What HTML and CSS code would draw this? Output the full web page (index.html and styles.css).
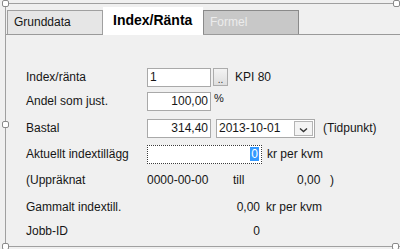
FILE: index.html
```html
<!DOCTYPE html>
<html>

<head>
    <title>Index/Ränta</title>
    <link rel="stylesheet" href="styles.css">
</head>

<body>
    <div class="panel">
        <div class="tabs">
            <div class="tab">Grunddata</div>
            <div class="tab active">Index/Ränta</div>
            <div class="tab disabled">Formel</div>
        </div>

        <div class="form">
            <div class="label">Index/ränta</div>
            <div class="field">
                <span class="box w64">1</span>
                <span class="browse">..</span>
                <span class="kpi">KPI 80</span>
            </div>

            <div class="label">Andel som just.</div>
            <div class="field">
                <span class="box w64 num">100,00</span>
                <span class="pct">%</span>
            </div>

            <div class="label">Bastal</div>
            <div class="field">
                <span class="box w64 num">314,40</span>
                <span class="box combo">
                    <span class="combo-text">2013-10-01</span>
                    <span class="drop">
                        <svg width="9" height="6" viewBox="0 0 9 6"><path d="M1 1.5 L4.5 4.5 L8 1.5" fill="none" stroke="#333" stroke-width="1.4"/></svg>
                    </span>
                </span>
                <span class="tid">(Tidpunkt)</span>
            </div>

            <div class="label">Aktuellt indextillägg</div>
            <div class="field">
                <span class="box focus"><span class="sel">0</span></span>
                <span class="unit">kr per kvm</span>
            </div>

            <div class="label">(Uppräknat</div>
            <div class="field">
                <span class="up-date">0000-00-00</span>
                <span class="up-till">till</span>
                <span class="up-val">0,00</span>
                <span>)</span>
            </div>

            <div class="label">Gammalt indextill.</div>
            <div class="field">
                <span class="val">0,00</span>
                <span class="unit">kr per kvm</span>
            </div>

            <div class="label">Jobb-ID</div>
            <div class="field">
                <span class="val">0</span>
            </div>
        </div>
    </div>

    <!-- designer selection handles -->
    <span class="handle tl"></span>
    <span class="handle tr"></span>
    <span class="handle ml"></span>
    <span class="handle bl"></span>
    <span class="handle br"></span>
</body>

</html>
```

FILE: styles.css
```css
body {
    margin: 0;
    width: 400px;
    height: 249px;
    overflow: hidden;
    position: relative;
    background-color: #f0f0f0;
    font-family: "Liberation Sans", Arial, sans-serif;
    font-size: 12px;
    color: #161616;
}

.panel {
    margin: 3px 0 0 5px;
    height: 242px;
    border-top: 1px solid #a0a0a0;
    border-left: 1px solid #a0a0a0;
    border-bottom: 1px solid #a0a0a0;
}

/* tab strip */
.tabs {
    display: flex;
    align-items: flex-end;
    height: 30px;
    padding-left: 1px;
    border-bottom: 1px solid #9a9a9a;
}

.tab {
    box-sizing: border-box;
    height: 24px;
    line-height: 23px;
    width: 96px;
    padding-left: 6px;
    background-color: #e6e6e6;
    border: 1px solid #a0a0a0;
    border-bottom: none;
}

.tab.active {
    position: relative;
    width: 100px;
    height: 28px;
    line-height: 27px;
    margin-bottom: -1px;
    padding-left: 10px;
    background-color: #fff;
    border: none;
    font-size: 14px;
    font-weight: bold;
    color: #000;
}

.tab.disabled {
    width: 96px;
    background-color: #c8c8c8;
    border-color: #8a8a8a;
    color: #ececec;
}

/* form rows */
.form {
    display: grid;
    grid-template-columns: 121px 1fr;
    grid-template-rows: 24px 27px 26px 26px 27px 24px 20px;
    margin-top: 32px;
    padding-left: 20px;
}

.label {
    height: 20px;
    line-height: 20px;
}

.field {
    display: flex;
    align-items: center;
    height: 20px;
}

.box {
    box-sizing: border-box;
    height: 19px;
    line-height: 17px;
    padding: 0 2px;
    background-color: #fff;
    border: 1px solid #a9a9a9;
}

.w64 {
    width: 64px;
}

.num {
    text-align: right;
}

.browse {
    box-sizing: border-box;
    width: 15px;
    height: 18px;
    margin-left: 2px;
    border: 1px solid #acacac;
    background: linear-gradient(#f3f3f3, #dedede);
    font-size: 10px;
    line-height: 22px;
    text-align: center;
    color: #333;
}

.kpi {
    margin-left: 7px;
}

.pct {
    align-self: flex-start;
    margin-left: 3px;
    font-size: 11px;
    line-height: 14px;
}

.combo {
    display: flex;
    align-items: center;
    width: 99px;
    margin-left: 5px;
    padding: 0 1px 0 2px;
}

.combo-text {
    flex: 1;
}

.drop {
    box-sizing: border-box;
    display: flex;
    align-items: flex-end;
    justify-content: center;
    width: 19px;
    height: 15px;
    padding-bottom: 2px;
    border: 1px solid #b4b4b4;
    background-color: #f4f4f4;
}

.tid {
    margin-left: 8px;
}

.focus {
    display: flex;
    justify-content: flex-end;
    align-items: center;
    width: 115px;
    padding-right: 2px;
    border: 1px dotted #3c3c3c;
}

.sel {
    height: 14px;
    line-height: 14px;
    padding: 0 1px;
    background-color: #3399ff;
    color: #fff;
}

.unit {
    margin-left: 5px;
}

.up-date {
    width: 86px;
}

.up-till {
    width: 64px;
}

.up-val {
    width: 33px;
}

.val {
    width: 113px;
    text-align: right;
}

.val + .unit {
    margin-left: 6px;
}

/* selection handles */
.handle {
    position: absolute;
    width: 5px;
    height: 5px;
    background-color: #fff;
    border: 1px solid #8a8a8a;
    border-radius: 2px;
}

.tl { left: 2px; top: 0; }
.tr { left: 393px; top: 0; }
.ml { left: 2px; top: 121px; }
.bl { left: 2px; top: 243px; }
.br { left: 392px; top: 243px; }
```
